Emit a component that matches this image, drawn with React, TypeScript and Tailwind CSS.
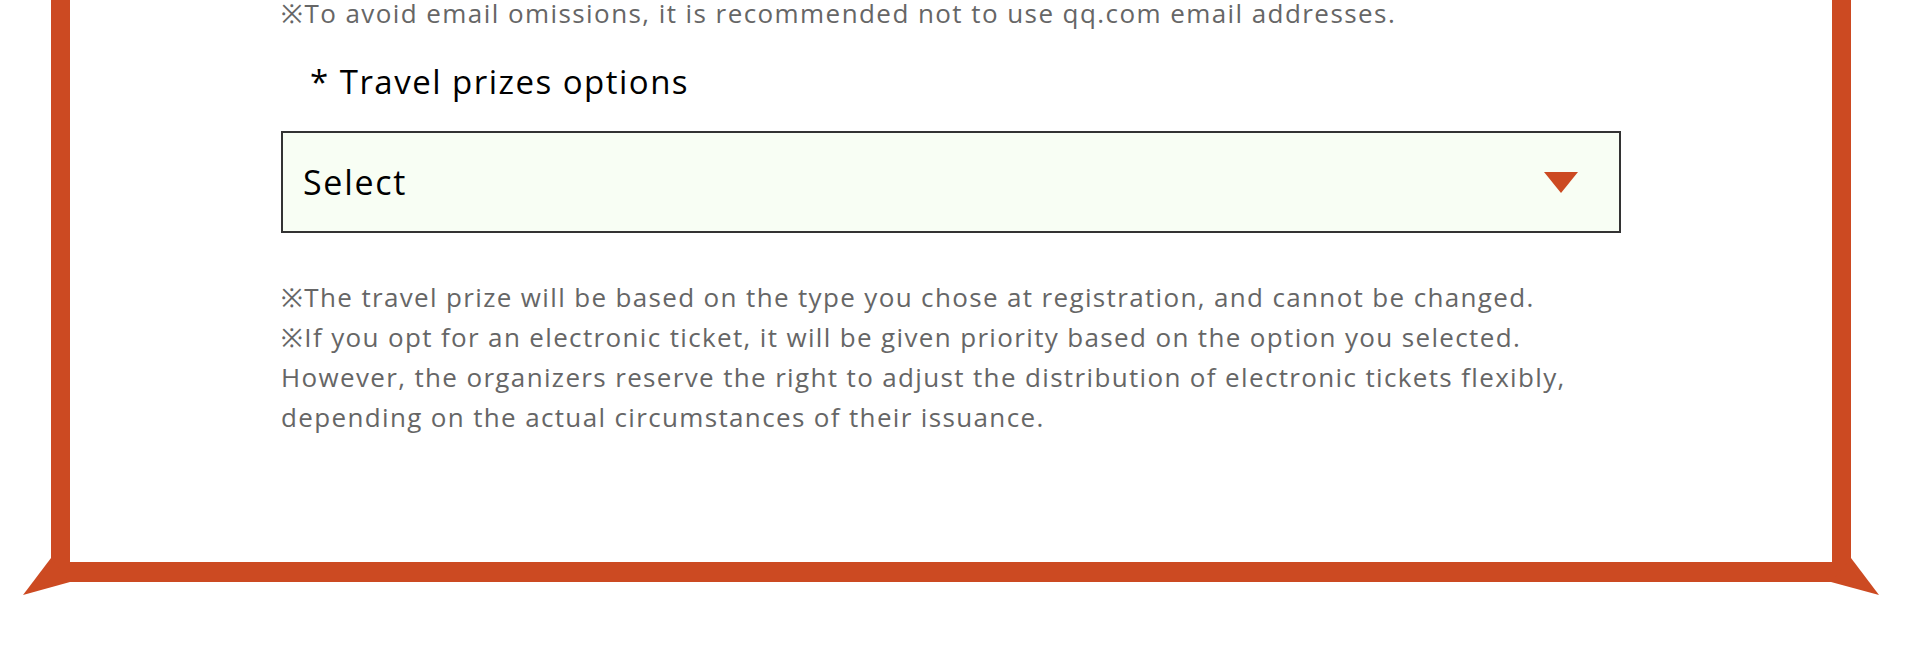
const orange = "#cc4a22";

function Spike({ side }: { side: "left" | "right" }) {
  const left = side === "left";
  return (
    <svg
      className={left ? "absolute left-[23px] top-[558px]" : "absolute left-[1831px] top-[558px]"}
      width="48"
      height="38"
      viewBox="0 0 48 38"
    >
      <polygon points={left ? "28,0 0,37 47,24" : "20,0 48,37 0,24"} fill={orange} />
    </svg>
  );
}

export default function App() {
  return (
    <div className="relative h-[660px] w-full overflow-hidden bg-white font-['Open_Sans',sans-serif]">
      <div className="ml-[51px] flex h-[582px] w-[1800px] flex-col border-x-[19px] border-b-[20px] border-[#cc4a22] bg-white">
        <div className="mx-auto -mt-[7px] w-[1340px]">
          <p className="whitespace-nowrap text-[26px] leading-[40px] tracking-[0.055em] text-[#666666]">
            ※To avoid email omissions, it is recommended not to use qq.com email addresses.
          </p>

          <h3 className="mt-[29px] pl-[29px] text-[33px] leading-[40px] tracking-[0.045em] text-black">
            * Travel prizes options
          </h3>

          <div className="mt-[29px] flex h-[102px] items-center justify-between border-2 border-[#333333] bg-[#f8fef4] pl-[20px] pr-[41px]">
            <span className="text-[34px] tracking-[0.05em] text-black">Select</span>
            <svg width="34" height="21" viewBox="0 0 34 21">
              <polygon points="0,0 34,0 17,21" fill={orange} />
            </svg>
          </div>

          <p className="mt-[44px] whitespace-nowrap text-[26px] leading-[40px] tracking-[0.052em] text-[#666666]">
            ※The travel prize will be based on the type you chose at registration, and cannot be changed.
            <br />
            ※If you opt for an electronic ticket, it will be given priority based on the option you selected.
            <br />
            However, the organizers reserve the right to adjust the distribution of electronic tickets flexibly,
            <br />
            depending on the actual circumstances of their issuance.
          </p>
        </div>
      </div>
      <Spike side="left" />
      <Spike side="right" />
    </div>
  );
}
